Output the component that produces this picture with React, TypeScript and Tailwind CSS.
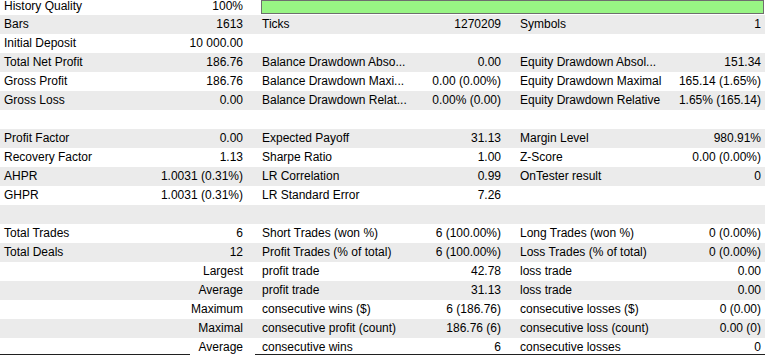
type Cell = [string, string]

const rows: Cell[][] = [
  [['Bars', '1613'], ['Ticks', '1270209'], ['Symbols', '1']],
  [['Initial Deposit', '10 000.00'], ['', ''], ['', '']],
  [['Total Net Profit', '186.76'], ['Balance Drawdown Abso...', '0.00'], ['Equity Drawdown Absol...', '151.34']],
  [['Gross Profit', '186.76'], ['Balance Drawdown Maxi...', '0.00 (0.00%)'], ['Equity Drawdown Maximal', '165.14 (1.65%)']],
  [['Gross Loss', '0.00'], ['Balance Drawdown Relat...', '0.00% (0.00)'], ['Equity Drawdown Relative', '1.65% (165.14)']],
  [['', ''], ['', ''], ['', '']],
  [['Profit Factor', '0.00'], ['Expected Payoff', '31.13'], ['Margin Level', '980.91%']],
  [['Recovery Factor', '1.13'], ['Sharpe Ratio', '1.00'], ['Z-Score', '0.00 (0.00%)']],
  [['AHPR', '1.0031 (0.31%)'], ['LR Correlation', '0.99'], ['OnTester result', '0']],
  [['GHPR', '1.0031 (0.31%)'], ['LR Standard Error', '7.26'], ['', '']],
  [['', ''], ['', ''], ['', '']],
  [['Total Trades', '6'], ['Short Trades (won %)', '6 (100.00%)'], ['Long Trades (won %)', '0 (0.00%)']],
  [['Total Deals', '12'], ['Profit Trades (% of total)', '6 (100.00%)'], ['Loss Trades (% of total)', '0 (0.00%)']],
  [['', 'Largest'], ['profit trade', '42.78'], ['loss trade', '0.00']],
  [['', 'Average'], ['profit trade', '31.13'], ['loss trade', '0.00']],
  [['', 'Maximum'], ['consecutive wins ($)', '6 (186.76)'], ['consecutive losses ($)', '0 (0.00)']],
  [['', 'Maximal'], ['consecutive profit (count)', '186.76 (6)'], ['consecutive loss (count)', '0.00 (0)']],
  [['', 'Average'], ['consecutive wins', '6'], ['consecutive losses', '0']],
]

const Group = ({ cell, width, last }: { cell: Cell; width: string; last?: boolean }) => (
  <div className={`${width} ${last ? '' : 'mr-[11px]'} flex justify-between px-1 whitespace-nowrap`}>
    <span>{cell[0]}</span>
    <span>{cell[1]}</span>
  </div>
)

const App = () => {
  return (
    <div
      className="w-[765px] h-[356px] overflow-hidden bg-white text-[12px] text-black"
      style={{ fontFamily: '"Liberation Sans", Arial, sans-serif' }}
    >
      {/* first row, partly scrolled out */}
      <div className="flex h-[15px] leading-[13px]">
        <div className="w-[247px] mr-[11px] flex justify-between px-1">
          <span>History Quality</span>
          <span>100%</span>
        </div>
        <div className="w-[503px] h-[14px] border border-[#6e6e6e] bg-[#98f584] ml-[3px]" />
      </div>

      {rows.map((r, i) => (
        <div
          key={i}
          className={`flex leading-[19px] ${i === rows.length - 1 ? 'h-[16px]' : 'h-[19px]'} ${i % 2 === 0 ? 'bg-[#ebebeb]' : 'bg-white'}`}
        >
          <Group cell={r[0]} width="w-[247px]" />
          <Group cell={r[1]} width="w-[247px]" />
          <Group cell={r[2]} width="w-[249px]" last />
        </div>
      ))}

      <div className="flex h-[1px]">
        <div className="w-[190px] bg-[#202020]" />
        <div className="w-[65px]" />
        <div className="flex-1 bg-[#202020]" />
      </div>
    </div>
  )
}

export default App
